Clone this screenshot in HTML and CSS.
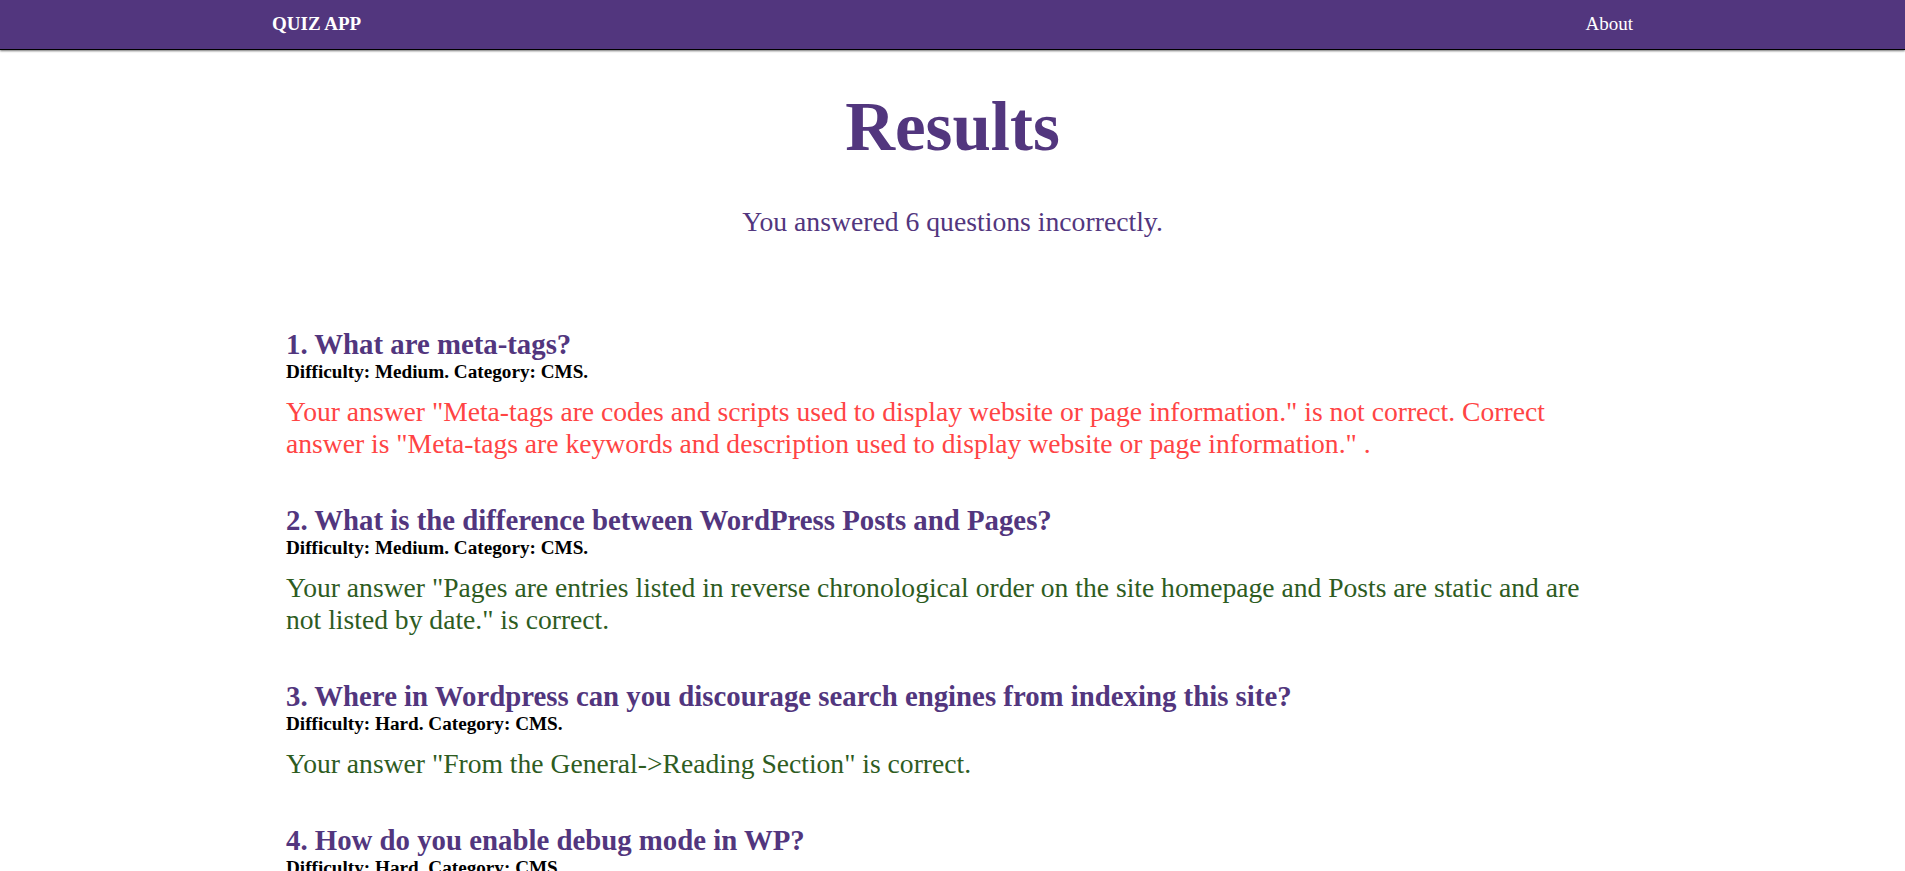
FILE: index.html
```html
<!DOCTYPE html>
<html lang="en">
<head>
<meta charset="utf-8">
<title>Quiz App - Results</title>
<link rel="stylesheet" href="styles.css">
</head>
<body>
<nav class="navbar">
  <div class="nav-inner">
    <a class="brand" href="#">QUIZ APP</a>
    <a class="nav-link" href="#">About</a>
  </div>
</nav>
<main class="container">
  <h1 class="title">Results</h1>
  <p class="summary">You answered 6 questions incorrectly.</p>
  <ol class="questions">
    <li class="question">
      <h3 class="q-title">1. What are meta-tags?</h3>
      <div class="q-meta">Difficulty: Medium. Category: CMS.</div>
      <p class="answer wrong">Your answer "Meta-tags are codes and scripts used to display website or page information." is not correct. Correct answer is "Meta-tags are keywords and description used to display website or page information." .</p>
    </li>
    <li class="question">
      <h3 class="q-title">2. What is the difference between WordPress Posts and Pages?</h3>
      <div class="q-meta">Difficulty: Medium. Category: CMS.</div>
      <p class="answer right">Your answer "Pages are entries listed in reverse chronological order on the site homepage and Posts are static and are not listed by date." is correct.</p>
    </li>
    <li class="question">
      <h3 class="q-title">3. Where in Wordpress can you discourage search engines from indexing this site?</h3>
      <div class="q-meta">Difficulty: Hard. Category: CMS.</div>
      <p class="answer right">Your answer "From the General-&gt;Reading Section" is correct.</p>
    </li>
    <li class="question">
      <h3 class="q-title">4. How do you enable debug mode in WP?</h3>
      <div class="q-meta">Difficulty: Hard. Category: CMS.</div>
      <p class="answer wrong">Your answer "By setting WP_DEBUG to true in wp-config.php" is not correct.</p>
    </li>
  </ol>
</main>
</body>
</html>
```
FILE: styles.css
```css
* { box-sizing: border-box; }
html, body { margin: 0; padding: 0; }
body {
  font-family: "Liberation Serif", "Times New Roman", serif;
  background: #ffffff;
  color: #000;
}
.navbar {
  background: #52367e;
  height: 49px;
  box-shadow: 0 1px 0 #000000, 0 2px 2px rgba(0, 0, 0, 0.55);
  display: flex;
  align-items: center;
}
.nav-inner {
  width: 1361px;
  margin: 0 auto;
  display: flex;
  justify-content: space-between;
  align-items: center;
  padding-bottom: 2px;
}
.brand {
  color: #fff;
  font-weight: bold;
  font-size: 19px;
  text-decoration: none;
}
.nav-link {
  color: #fff;
  font-size: 19px;
  text-decoration: none;
}
.container {
  width: 1361px;
  margin: 0 auto;
  padding: 0 14px;
}
.title {
  margin: 37px 0 0;
  text-align: center;
  font-size: 69px;
  line-height: 1.2;
  font-weight: bold;
  color: #52367e;
}
.summary {
  margin: 37px 0 0;
  text-align: center;
  font-size: 27.7px;
  line-height: 32px;
  color: #52367e;
}
.questions {
  list-style: none;
  margin: 91px 0 0;
  padding: 0 34px 0 0;
}
.question { margin: 0 0 45px; }
.q-title {
  margin: 0;
  font-size: 28.8px;
  line-height: 31px;
  font-weight: bold;
  color: #52367e;
}
.q-meta {
  font-size: 19.2px;
  line-height: 24px;
  font-weight: bold;
  color: #000;
}
.answer {
  margin: 12px 0 0;
  font-size: 27.6px;
  line-height: 32px;
}
.answer.wrong { color: #ff4444; }
.answer.right { color: #2e5c1f; }
```
